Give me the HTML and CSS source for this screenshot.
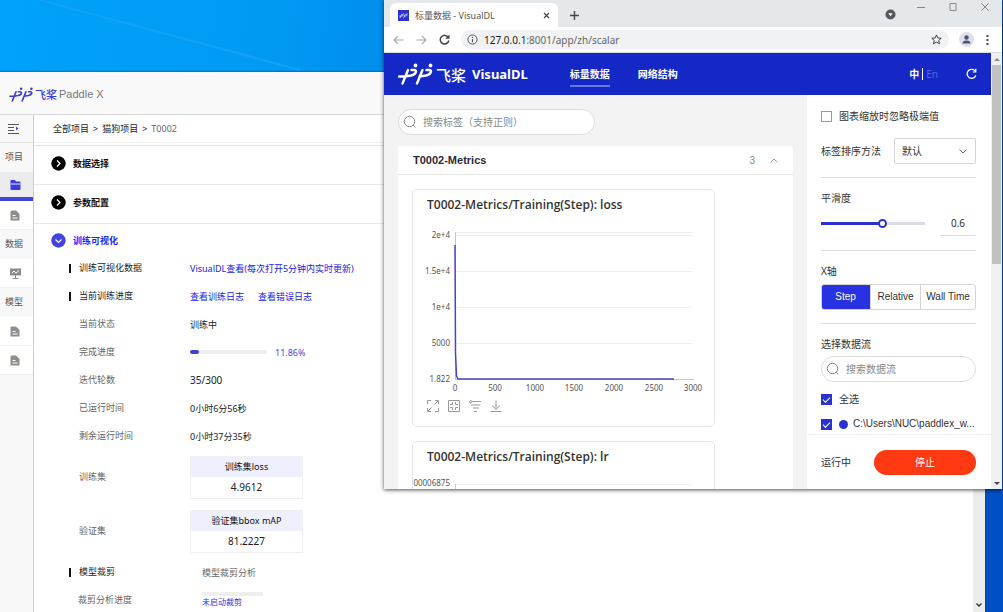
FILE: index.html
```html
<!DOCTYPE html>
<html lang="zh-CN">
<head>
<meta charset="utf-8">
<title>标量数据 - VisualDL</title>
<link rel="stylesheet" href="styles.css">
</head>
<body>
<svg class="defs" width="0" height="0" aria-hidden="true">
  <symbol id="mark" viewBox="0 0 36 22">
    <g fill="none" stroke="currentColor" stroke-width="2.4" stroke-linecap="round" stroke-linejoin="round">
      <path d="M1 13.500H7M10 7L4.500 20.500M7 13.500L13 12.500Q17.500 11.500 18 8.500Q18 7 16 7H13.500"/>
      <path d="M24.500 7L19 20.500M21.500 13.500L28 12.500Q32.500 11.500 33 8.500Q33 7 31 7H28.500"/>
    </g>
    <circle cx="17.500" cy="2.500" r="1.900" fill="currentColor"/><circle cx="32.500" cy="2.500" r="1.900" fill="currentColor"/>
  </symbol>
  <symbol id="doc" viewBox="0 0 10 11"><path d="M1.500 0.500H6L9.500 4V10.500H0.500V1.500Z" fill="#8d8d93"/><path d="M2.500 5.500H5.500M2.500 8H7.500" stroke="#fff"/></symbol>
  <symbol id="search" viewBox="0 0 14 14"><circle cx="6.500" cy="6.500" r="5.200" fill="none" stroke="#888"/><path d="M10.300 10.300L12.300 12.500" stroke="#888"/></symbol>
</svg>
<div class="desktop">
  <svg class="ray" viewBox="0 0 384 72" aria-hidden="true"><path d="M40 0L300 70" stroke="#12a2f6" stroke-width="2"/></svg>

  <section class="paddle">
    <header class="paddle-head">
      <svg class="paddle-mark"><use href="#mark"/></svg><b class="paddle-cn">飞桨</b><span class="paddle-name">Paddle X</span>
    </header>
    <div class="paddle-body">
      <nav class="side">
        <button class="side-item toggle" aria-label="展开"><svg width="11" height="11" viewBox="0 0 11 11"><path d="M0 1.500H11M0 4.500H6M0 7.500H6M0 10.500H11" stroke="#555"/><path d="M8 3.500L10.500 5.500L8 7.500Z" fill="#4549dc"/></svg></button>
        <span class="side-title">项目</span>
        <button class="side-item active" aria-label="项目列表"><svg width="11" height="10" viewBox="0 0 11 10"><path d="M1 0H5L6 1.500H10Q10.500 1.500 10.500 2V9Q10.500 10 9.500 10H1Q0.500 10 0.500 9V1Q0.500 0 1 0Z" fill="#3a3de0"/><path d="M1 4H10.500" stroke="#e6e6fa"/></svg></button>
        <button class="side-item" aria-label="项目文档"><svg width="10" height="11"><use href="#doc"/></svg></button>
        <span class="side-title">数据</span>
        <button class="side-item" aria-label="数据看板"><svg width="11" height="11" viewBox="0 0 11 11"><path d="M0 0.500H11V7.500H0Z" fill="#8d8d93"/><path d="M2 5L4 3L6 5L9 2.500" fill="none" stroke="#fff"/><path d="M5.500 7V10M2.500 10.500H8.500" stroke="#8d8d93"/></svg></button>
        <span class="side-title">模型</span>
        <button class="side-item" aria-label="模型列表"><svg width="10" height="11"><use href="#doc"/></svg></button>
        <button class="side-item last" aria-label="模型文档"><svg width="10" height="11"><use href="#doc"/></svg></button>
      </nav>
      <main class="content">
        <nav class="crumbs"><a href="#">全部项目</a><span>&gt;</span><a href="#">猫狗项目</a><span>&gt;</span><em>T0002</em></nav>
        <h2 class="step"><svg width="15" height="15" viewBox="0 0 15 15"><circle cx="7.500" cy="7.500" r="7.200"/><path d="M6 4.500L9 7.500L6 10.500" fill="none" stroke="#fff" stroke-width="1.200"/></svg>数据选择</h2>
        <h2 class="step"><svg width="15" height="15" viewBox="0 0 15 15"><circle cx="7.500" cy="7.500" r="7.200"/><path d="M6 4.500L9 7.500L6 10.500" fill="none" stroke="#fff" stroke-width="1.200"/></svg>参数配置</h2>
        <h2 class="step open"><svg width="15" height="15" viewBox="0 0 15 15"><circle cx="7.500" cy="7.500" r="7.200" fill="#4343e4"/><path d="M4.500 6.500L7.500 9.500L10.500 6.500" fill="none" stroke="#fff" stroke-width="1.200"/></svg>训练可视化</h2>
        <dl class="rows">
          <div class="row"><dt class="mark">训练可视化数据</dt><dd><a href="#">VisualDL查看(每次打开5分钟内实时更新)</a></dd></div>
          <div class="row"><dt class="mark">当前训练进度</dt><dd class="links"><a href="#">查看训练日志</a><a href="#">查看错误日志</a></dd></div>
          <div class="row"><dt>当前状态</dt><dd>训练中</dd></div>
          <div class="row"><dt>完成进度</dt><dd class="prog"><span class="bar"><span class="fill" style="width:11.86%"></span></span><span class="pct">11.86%</span></dd></div>
          <div class="row"><dt>迭代轮数</dt><dd class="big">35/300</dd></div>
          <div class="row"><dt>已运行时间</dt><dd>0小时6分56秒</dd></div>
          <div class="row"><dt>剩余运行时间</dt><dd>0小时37分35秒</dd></div>
          <div class="row tall"><dt>训练集</dt><dd><table><tr><th>训练集loss</th></tr><tr><td>4.9612</td></tr></table></dd></div>
          <div class="row tall"><dt>验证集</dt><dd><table><tr><th>验证集bbox mAP</th></tr><tr><td>81.2227</td></tr></table></dd></div>
          <div class="row"><dt class="mark">模型裁剪</dt><dd class="inset">模型裁剪分析</dd></div>
          <div class="row"><dt class="near">裁剪分析进度</dt><dd class="inset prune"><span class="thin"></span><small>未启动裁剪</small></dd></div>
        </dl>
      </main>
      <div class="scroll"><svg width="6" height="4" viewBox="0 0 6 4"><path d="M0.500 0.500L3 3L5.500 0.500" fill="none" stroke="#333" stroke-width="1.300"/></svg></div>
    </div>
  </section>

  <section class="browser">
    <div class="tabs">
      <div class="tab"><span class="fav"><svg width="9" height="7"><use href="#mark"/></svg></span><span class="tab-title">标量数据 - VisualDL</span>
        <button aria-label="关闭标签页"><svg width="7" height="7" viewBox="0 0 7 7"><path d="M1 1L6 6M6 1L1 6" stroke="#444" stroke-width="1.200"/></svg></button></div>
      <button class="plus" aria-label="新标签页"><svg width="9" height="9" viewBox="0 0 9 9"><path d="M4.500 0V9M0 4.500H9" stroke="#444" stroke-width="1.400"/></svg></button>
      <span class="grow"></span>
      <svg class="down" width="11" height="11" viewBox="0 0 11 11"><circle cx="5.500" cy="5.500" r="5" fill="#55585c"/><path d="M3.300 4.300H7.700L5.500 7.300Z" fill="#fff"/></svg>
      <div class="win">
        <button aria-label="最小化"><svg width="8" height="8" viewBox="0 0 8 8"><path d="M0 4.500H8" stroke="#888"/></svg></button>
        <button aria-label="最大化"><svg width="8" height="8" viewBox="0 0 8 8"><path d="M1 0.500H7V7.500H1Z" fill="none" stroke="#888"/></svg></button>
        <button aria-label="关闭"><svg width="8" height="8" viewBox="0 0 8 8"><path d="M0.500 0.500L7.500 7.500M7.500 0.500L0.500 7.500" stroke="#888"/></svg></button>
      </div>
    </div>
    <div class="toolbar">
      <button aria-label="后退"><svg width="11" height="10" viewBox="0 0 11 10"><path d="M10.500 5H1M5 1L1 5L5 9" fill="none" stroke="#aaa" stroke-width="1.100"/></svg></button>
      <button aria-label="前进"><svg width="11" height="10" viewBox="0 0 11 10"><path d="M0.500 5H10M6 1L10 5L6 9" fill="none" stroke="#aaa" stroke-width="1.100"/></svg></button>
      <button aria-label="刷新"><svg width="11" height="11" viewBox="0 0 11 11"><path d="M9.300 3.500A4.300 4.300 0 1 0 9.800 6.500" fill="none" stroke="#444" stroke-width="1.500"/><path d="M10.500 0.500V4.800H6.200Z" fill="#444"/></svg></button>
      <div class="address">
        <svg width="11" height="11" viewBox="0 0 11 11"><circle cx="5.500" cy="5.500" r="4.600" fill="none" stroke="#555"/><path d="M5.500 5V8.200M5.500 2.800V4" stroke="#555" stroke-width="1.200"/></svg>
        <span class="url">127.0.0.1<i>:8001/app/zh/scalar</i></span>
        <svg width="11" height="11" viewBox="0 0 11 11"><path d="M5.500 0.900L6.900 4L10.200 4.300L7.700 6.500L8.500 9.800L5.500 8.100L2.500 9.800L3.300 6.500L0.800 4.300L4.100 4Z" fill="none" stroke="#444"/></svg>
      </div>
      <span class="user"><svg width="9" height="9" viewBox="0 0 9 9"><circle cx="4.500" cy="2.500" r="2.200" fill="#4b5570"/><path d="M0.500 8.500Q0.500 5.500 4.500 5.500T8.500 8.500Z" fill="#4b5570"/></svg></span>
      <button class="dots" aria-label="菜单"><svg width="3" height="10" viewBox="0 0 3 10"><path d="M1.500 0V2M1.500 4V6M1.500 8V10" stroke="#444" stroke-width="2"/></svg></button>
    </div>
    <div class="view">
      <div class="page">
        <header class="vdl-head">
          <svg class="vdl-mark"><use href="#mark"/></svg><b class="vdl-cn">飞桨</b><b class="vdl-name">VisualDL</b>
          <nav class="vdl-nav"><a class="on" href="#">标量数据</a><a href="#">网络结构</a></nav>
          <span class="lang"><b>中</b><span>En</span></span>
          <button class="reload" aria-label="刷新数据"><svg width="11" height="12" viewBox="0 0 11 12"><path d="M9.500 3.500A4.500 4.500 0 1 0 9.800 7.500" fill="none" stroke="#fff" stroke-width="1.300"/><path d="M9.800 0.800V4H6.800" fill="none" stroke="#fff" stroke-width="1.200"/></svg></button>
        </header>
        <div class="cols">
          <main class="scalars">
            <label class="search wide"><svg width="14" height="14"><use href="#search"/></svg><input type="text" aria-label="搜索标签" placeholder="搜索标签（支持正则）"></label>
            <section class="group">
              <header class="group-head"><h3>T0002-Metrics</h3><span>3</span><svg width="8" height="5" viewBox="0 0 8 5"><path d="M0.500 4.300L4 1L7.500 4.300" fill="none" stroke="#999"/></svg></header>
              <div class="cards">
                <article class="card">
                  <h4>T0002-Metrics/Training(Step): loss</h4>
                  <svg class="plot" viewBox="0 0 301 175">
                    <path d="M42 9.500H280M42 12.500H280M42 48.500H280M42 84.500H280M42 120.500H280" stroke="#eee"/>
                    <path d="M42.500 9V156M42 156.500H281" fill="none" stroke="#c4c4cc"/>
                    <path d="M42 22L42.500 130L43.500 153L45 156H261" fill="none" stroke="#4745c8" stroke-width="1.500"/>
                    <g class="ylab"><text x="37" y="15">2e+4</text><text x="37" y="51">1.5e+4</text><text x="37" y="87">1e+4</text><text x="37" y="123">5000</text><text x="37" y="159">1.822</text></g>
                    <g class="xlab"><text x="42" y="168">0</text><text x="82" y="168">500</text><text x="122" y="168">1000</text><text x="161" y="168">1500</text><text x="201" y="168">2000</text><text x="241" y="168">2500</text><text x="280" y="168">3000</text></g>
                  </svg>
                  <div class="tools">
                    <button aria-label="放大"><svg width="12" height="12" viewBox="0 0 12 12"><path d="M0.500 4V0.500H4M8 0.500H11.500V4M11.500 8V11.500H8M4 11.500H0.500V8M7.500 4.500L11 1M4.500 7.500L1 11" fill="none" stroke="#999"/></svg></button>
                    <button aria-label="还原"><svg width="12" height="12" viewBox="0 0 12 12"><path d="M0.500 0.500H11.500V11.500H0.500ZM4.500 2V4.500H2M7.500 2V4.500H10M4.500 10V7.500H2M7.500 10V7.500H10" fill="none" stroke="#999"/></svg></button>
                    <button aria-label="对数坐标"><svg width="12" height="12" viewBox="0 0 12 12"><circle cx="1.800" cy="1.800" r="1.200" fill="none" stroke="#999"/><path d="M3 1.500H12M2 5H11M4 8H10M5 11.500H8" stroke="#999"/></svg></button>
                    <button aria-label="下载"><svg width="12" height="12" viewBox="0 0 12 12"><path d="M6 0.500V9M2 5.500L6 9.300L10 5.500M0.500 11.500H11.500" fill="none" stroke="#999"/></svg></button>
                  </div>
                </article>
                <article class="card">
                  <h4>T0002-Metrics/Training(Step): lr</h4>
                  <svg class="plot" viewBox="0 0 301 175"><path d="M42 9.500H280" stroke="#eee"/><path d="M42.500 9V156" stroke="#c4c4cc"/><g class="ylab"><text x="37" y="11">00006875</text></g></svg>
                </article>
              </div>
            </section>
          </main>
          <aside class="opts">
            <div class="opts-body">
              <label class="check"><input type="checkbox">图表缩放时忽略极端值</label>
              <div class="sort"><label for="sort">标签排序方法</label><select id="sort"><option>默认</option></select></div>
              <hr>
              <label class="cap" for="smooth">平滑度</label>
              <div class="smooth"><input id="smooth" type="range" min="0" max="1" step="0.01" value="0.6"><input class="num" type="text" value="0.6" aria-label="平滑度数值"></div>
              <hr>
              <span class="cap">X轴</span>
              <div class="seg"><button class="on">Step</button><button>Relative</button><button>Wall Time</button></div>
              <hr>
              <span class="cap">选择数据流</span>
              <label class="search"><svg width="14" height="14"><use href="#search"/></svg><input type="text" aria-label="搜索数据流" placeholder="搜索数据流"></label>
              <label class="check run"><input type="checkbox" checked>全选</label>
              <label class="check run"><input type="checkbox" checked><i class="dot"></i><span class="path">C:\Users\NUC\paddlex_w...</span></label>
            </div>
            <footer class="opts-foot"><span>运行中</span><button>停止</button></footer>
          </aside>
        </div>
      </div>
      <div class="vscroll"><svg width="6" height="3" viewBox="0 0 6 3"><path d="M0 3L3 0L6 3Z" fill="#888"/></svg><span class="thumb"></span><svg width="6" height="3" viewBox="0 0 6 3"><path d="M0 0L3 3L6 0Z" fill="#444"/></svg></div>
    </div>
  </section>
</div>
</body>
</html>
```
FILE: styles.css
```css
* { box-sizing: border-box; }
body { margin: 0; font-family: "Noto Sans", "Noto Sans CJK SC", sans-serif; font-size: 9px; color: #333; }
h2, h3, h4, dl, dd { margin: 0; }
a { color: inherit; text-decoration: none; }
button { border: 0; padding: 0; background: none; font: inherit; color: inherit; display: flex; align-items: center; justify-content: center; }
input, select { font: inherit; color: inherit; margin: 0; }
svg { flex: none; display: block; }
i, em { font-style: normal; }
.defs { position: absolute; }
.desktop { position: relative; height: 100vh; overflow: hidden; background: linear-gradient(100deg, #00a2fb 0%, #009af3 25%, #0086e8 42%, #0050c4 80%); }
.ray { position: absolute; left: 0; top: 0; width: 384px; }

/* PaddleX window */
.paddle { position: absolute; left: 0; right: 18px; top: 72px; bottom: 0; display: flex; flex-direction: column; background: #fff; box-shadow: 0 0 2px #023a66; }
.paddle-head { display: flex; align-items: center; height: 43px; padding: 2px 9px 0; background: #f9f9f9; border-bottom: 1px solid #d6d6d6; }
.paddle-mark { width: 25px; height: 15px; color: #3a3de0; }
.paddle-cn { margin-left: 1px; font-size: 11px; font-weight: 500; color: #3a3de0; }
.paddle-name { margin-left: 2px; font: 11px "Liberation Sans", sans-serif; color: #777; }
.paddle-body { display: flex; flex: 1; min-height: 0; }
.side { width: 34px; background: #f8f8f8; border-right: 1px solid #ccc; }
.side-item, .side-title { display: flex; align-items: center; width: 100%; height: 29px; }
.side-item { justify-content: center; background: #fff; border-bottom: 1px solid #f1f1f1; padding-right: 3px; }
.side-title { padding-left: 5px; padding-bottom: 2px; color: #555; background: #f8f8f8; }
.toggle { height: 28px; padding-right: 6px; background: #f8f8f8; border-color: #e2e2e2; }
.active { background: #ececec; border-bottom: 4px solid #4343dc; }
.content { flex: 1; min-width: 0; overflow: hidden; }
.crumbs { display: flex; align-items: center; gap: 4px; height: 28px; padding-left: 19px; border-bottom: 1px solid #eee; color: #222; }
.crumbs em { color: #666; }
.step { display: flex; align-items: center; gap: 7px; height: 39px; padding: 0 0 4px 17px; border-bottom: 1px solid #e9e9e9; font-size: 9px; color: #111; }
.crumbs + .step { height: 40px; margin-top: 2px; border-top: 1px solid #e4e4e4; }
.step.open { height: 30px; padding: 3px 0 0 17px; border: 0; color: #1a26ff; }
.rows { padding-left: 35px; }
.row { display: flex; align-items: center; height: 28px; }
.row dt { width: 121px; padding-left: 10px; padding-bottom: 1px; color: #666; }
.row dt.mark { color: #222; background: linear-gradient(#111, #111) 0 60% / 2px 9px no-repeat; }
.row dt.near { padding-left: 9px; }
.row dd { color: #222; }
.row a { color: #2020ee; }
.row.tall { height: 54px; }
.row dd.inset { padding-left: 12px; color: #666; }
.links { display: flex; gap: 14px; }
.row .big { font-size: 10px; }
.prog { display: flex; align-items: center; gap: 8px; }
.bar { width: 77px; height: 4px; border-radius: 2px; background: #eee; }
.fill { display: block; height: 4px; border-radius: 2px; background: #4343d4; }
.pct { color: #4a4ad8; }
.row table { width: 113px; border-collapse: collapse; border: 1px solid #f0f0f4; text-align: center; }
.row th, .row td { height: 21px; padding: 0; font-weight: 400; }
.row th { background: #eff0fe; color: #111; }
.row td { font-size: 10px; }
.prune small { display: block; font-size: 8px; line-height: 12px; color: #3434e0; }
.thin { display: block; width: 61px; height: 4px; background: #eee; }
.scroll { display: flex; align-items: flex-end; justify-content: center; width: 12px; padding-bottom: 5px; background: #ececec; }

/* Browser window */
.browser { position: absolute; left: 384px; right: 1px; top: 0; height: 489px; display: flex; flex-direction: column; background: #fff; box-shadow: 0 1px 4px rgba(0, 0, 0, .7); }
.tabs { display: flex; height: 27px; padding-left: 6px; background: #e5e8ea; }
.tab { display: flex; align-items: center; width: 168px; height: 24px; margin-top: 3px; padding: 0 8px; border-radius: 6px 6px 0 0; background: #fff; color: #555; }
.fav { display: flex; align-items: center; justify-content: center; width: 11px; height: 11px; background: #2932d0; color: #fff; }
.tab-title { flex: 1; margin-left: 6px; }
.plus { width: 32px; padding-top: 3px; }
.grow { flex: 1; }
.down { margin: 9px 21px 0 0; }
.win { display: flex; gap: 24px; height: 8px; margin: 3px 13px 0 0; }
.toolbar { display: flex; align-items: center; gap: 12px; height: 26px; padding: 0 13px 0 9px; border-bottom: 1px solid #d8dbe0; }
.address { display: flex; align-items: center; gap: 6px; flex: 1; height: 19px; margin-left: -1px; padding: 0 7px 0 6px; border-radius: 10px; background: #f0f2f3; }
.url { flex: 1; font-size: 10px; color: #222; }
.url i { color: #666; }
.user { display: flex; align-items: center; justify-content: center; width: 15px; height: 15px; margin-left: -2px; border-radius: 50%; background: #dde0ea; }
.view { display: flex; flex: 1; min-height: 0; }
.page { display: flex; flex-direction: column; flex: 1; min-width: 0; }
.vscroll { display: flex; flex-direction: column; align-items: center; width: 11px; padding: 5px 0 4px; background: #f0f0f0; }
.thumb { width: 9px; height: 199px; margin: 4px 0 auto; background: #c1c1c1; }
.vdl-head { display: flex; align-items: center; height: 42px; padding: 0 14px; background: #1527c4; color: #fff; }
.vdl-mark { width: 36px; height: 22px; }
.vdl-cn { margin-left: 2px; font-size: 15px; font-weight: 500; }
.vdl-name { margin-left: 6px; font-size: 13px; }
.vdl-nav { display: flex; gap: 28px; flex: 1; margin-left: 42px; font-size: 10px; font-weight: 700; }
.vdl-nav a { padding: 6px 0 4px; line-height: 14px; border-bottom: 2px solid transparent; }
.vdl-nav .on { border-color: #6b78e4; }
.lang { display: flex; font-size: 10px; line-height: 12px; }
.lang span { margin-left: 3px; padding-left: 3px; border-left: 1px solid #fff; color: #5866dc; }
.reload { margin-left: 28px; }
.cols { display: flex; flex: 1; min-height: 0; }
.scalars { flex: 1; min-width: 0; padding: 14px 14px 0; background: #f3f3f3; overflow: hidden; }
.search { display: flex; align-items: center; gap: 6px; height: 26px; padding: 0 6px 0 4px; border: 1px solid #ddd; border-radius: 13px; background: #fff; }
.search input { flex: 1; min-width: 0; padding: 0; border: 0; background: none; font-size: 10px; outline: 0; }
.search input::placeholder { color: #888; }
.search.wide { width: 197px; }
.group { margin-top: 11px; background: #fff; border-radius: 3px; }
.group-head { display: flex; align-items: center; gap: 15px; height: 29px; padding: 0 15px; border-bottom: 1px solid #e6e6e6; font: 10px "Liberation Sans", sans-serif; color: #888; }
.group-head h3 { flex: 1; font-size: 11px; color: #2c2c36; }
.cards { display: flex; flex-direction: column; gap: 14px; padding: 14px; }
.card { max-width: 303px; height: 238px; border: 1px solid #e4e4e4; border-radius: 5px; }
.card h4 { height: 33px; padding: 7px 14px 0; font: 600 12px/16px "Open Sans", sans-serif; color: #333; }
.plot { width: 100%; }
.plot text { font-size: 8px; fill: #555; }
.ylab { text-anchor: end; }
.xlab { text-anchor: middle; }
.tools { display: flex; gap: 9px; padding: 2px 14px 0; }
.opts { display: flex; flex-direction: column; width: 184px; background: #fff; font-size: 10px; line-height: 14px; }
.opts-body { flex: 1; min-height: 0; padding: 14px 15px 0 14px; overflow: hidden; }
.opts hr { height: 1px; margin: 13px 0; border: 0; background: #dedee2; }
.check { display: flex; align-items: center; gap: 7px; }
.check input { appearance: none; flex: none; width: 11px; height: 11px; border: 1px solid #999; background: #fff; }
.check input:checked { border-color: #2932d0; background: #2932d0; }
.check input:checked::before { content: ""; display: block; width: 6px; height: 3px; margin: 2px 0 0 1px; border: solid #fff; border-width: 0 0 1px 1px; transform: rotate(-45deg); }
.sort { display: flex; align-items: center; justify-content: space-between; margin-top: 15px; }
.sort select { appearance: none; width: 82px; height: 26px; padding: 0 7px; border: 1px solid #d5d5d5; border-radius: 2px; background: #fff url("data:image/svg+xml,%3Csvg xmlns='http://www.w3.org/2000/svg' width='8' height='5'%3E%3Cpath d='M.5 .5L4 4L7.500 .5' fill='none' stroke='%23666'/%3E%3C/svg%3E") right 8px center no-repeat; }
.cap { display: block; }
.smooth { display: flex; align-items: center; justify-content: space-between; margin-top: 6px; }
.smooth input[type="range"] { appearance: none; width: 104px; height: 9px; background: linear-gradient(90deg, #2932d0 60%, #dcdce6 60%) 0 50% / 100% 3px no-repeat; }
.smooth input::-webkit-slider-thumb { appearance: none; width: 9px; height: 9px; border: 2px solid #2932d0; border-radius: 50%; background: #fff; }
.smooth .num { width: 36px; height: 25px; padding: 0; border: 0; border-bottom: 1px solid #ddd; text-align: center; }
.smooth + hr { margin-top: 14px; }
.seg { display: flex; height: 26px; margin-top: 6px; border: 1px solid #d5d5d5; border-radius: 3px; font-family: "Liberation Sans", sans-serif; overflow: hidden; }
.seg button { flex: 50 1 0; white-space: nowrap; border-left: 1px solid #d5d5d5; }
.seg button:last-child { flex-grow: 55; }
.seg .on { margin: -1px 0 -1px -1px; border: 0; background: #2932e1; color: #fff; }
.opts .search { margin: 5px 0 10px; }
.run + .run { margin-top: 11px; }
.dot { flex: none; width: 9px; height: 9px; border-radius: 50%; background: #2932d0; }
.path { flex: none; margin-left: -2px; white-space: nowrap; font-family: "Liberation Sans", sans-serif; }
.opts-foot { display: flex; align-items: center; justify-content: space-between; height: 55px; padding: 0 15px 0 14px; border-top: 1px solid #f2f2f2; }
.opts-foot button { width: 102px; height: 25px; border-radius: 13px; background: #ff3912; color: #fff; }
```
